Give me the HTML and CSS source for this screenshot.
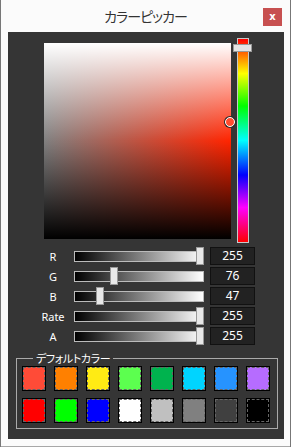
FILE: index.html
```html
<!DOCTYPE html>
<html lang="ja">
<head>
    <meta charset="UTF-8">
    <title>カラーピッカー</title>
    <link rel="stylesheet" href="styles.css">
</head>
<body>

    <div class="window">
        <div class="titlebar">
            <span></span>
            <span class="title">カラーピッカー</span>
            <button class="close">x</button>
        </div>

        <div class="panel">
            <div class="picker">
                <div class="square">
                    <span class="marker"></span>
                </div>
                <div class="hue">
                    <span class="hue-handle"></span>
                </div>
            </div>

            <div class="sliders" id="sliders">
                <!-- rows are built below -->
            </div>

            <fieldset class="defaults">
                <legend>デフォルトカラー</legend>
                <div class="swatches" id="swatches"></div>
            </fieldset>
        </div>
    </div>

    <script>
        const channels = [
            { name: 'R', value: 255 },
            { name: 'G', value: 76 },
            { name: 'B', value: 47 },
            { name: 'Rate', value: 255 },
            { name: 'A', value: 255 }
        ];

        const swatchColors = [
            '#ff4b37', '#ff8000', '#ffeb14', '#5cff4f', '#00b34e', '#00d4ff', '#2693ff', '#b66cff',
            '#ff0000', '#00ff00', '#0000ff', '#ffffff', '#c0c0c0', '#808080', '#404040', '#000000'
        ];

        const sliders = document.getElementById('sliders');
        channels.forEach(ch => {
            const row = document.createElement('div');
            row.className = 'slider-row';
            const left = Math.round(ch.value / 255 * 122);
            row.innerHTML = `
                <span class="label">${ch.name}</span>
                <div class="track"><span class="thumb" style="left:${left}px"></span></div>
                <span class="value">${ch.value}</span>
            `;
            sliders.appendChild(row);
        });

        const swatches = document.getElementById('swatches');
        swatchColors.forEach(c => {
            const sw = document.createElement('div');
            sw.className = 'swatch';
            sw.innerHTML = `<span style="background:${c}"></span>`;
            swatches.appendChild(sw);
        });
    </script>

</body>
</html>
```

FILE: styles.css
```css
body {
    margin: 0;
    background: #777;
    font-family: "Noto Sans", "Noto Sans CJK JP", sans-serif;
}

.window {
    width: 289px;
    height: 446px;
    margin-left: 1px;
    background: #fbfbfb;
    border-bottom: 1px solid #a8a8a8;
    position: relative;
}

.titlebar {
    height: 32px;
    display: grid;
    grid-template-columns: 1fr auto 1fr;
    align-items: center;
}

.title {
    font-family: "Noto Sans CJK JP", sans-serif;
    font-feature-settings: "palt";
    font-size: 14px;
    letter-spacing: -1px;
    color: #333;
    margin-top: -1px;
}

.close {
    justify-self: end;
    margin-right: 8px;
    margin-top: 1px;
    width: 19px;
    height: 18px;
    padding: 0;
    border: none;
    background: #c75050;
    color: #fff;
    font-family: "DejaVu Sans", sans-serif;
    font-weight: bold;
    font-size: 10px;
    line-height: 16px;
}

.panel {
    margin: 0 6px 0 7px;
    height: 407px;
    background: #353535;
    padding-top: 6px;
    box-sizing: border-box;
}

.picker {
    display: flex;
    align-items: flex-start;
    margin-left: 36px;
}

.square {
    position: relative;
    width: 187px;
    height: 196px;
    margin-top: 5px;
    background:
        linear-gradient(to bottom, #fff 0%, rgba(255,255,255,0) 50%, rgba(0,0,0,0) 50%, #000 100%),
        linear-gradient(to right, #808080, #ff2400);
}

.marker {
    position: absolute;
    left: 181px;
    top: 74px;
    width: 8px;
    height: 8px;
    border-radius: 50%;
    background: rgb(255, 76, 47);
    border: 1.5px solid #fff;
    box-shadow: 0 0 0 1px #2a2a2a;
}

.hue {
    position: relative;
    margin-left: 6px;
    width: 10px;
    height: 203px;
    border: 1px solid #c8c8c8;
    background: linear-gradient(to bottom, #f00 0%, #ff0 17%, #0f0 33%, #0ff 50%, #00f 67%, #f0f 83%, #f00 100%);
}

.hue-handle {
    position: absolute;
    left: -5px;
    top: 5px;
    width: 17px;
    height: 6px;
    background: #e4e4e4;
    border: 1px solid #999;
}

.sliders {
    margin-top: 3px;
}

.slider-row {
    height: 20px;
    display: flex;
    align-items: center;
    padding-left: 32px;
}

.label {
    width: 26px;
    text-align: center;
    color: #fff;
    font-size: 11px;
}

.track {
    position: relative;
    margin-left: 8px;
    width: 128px;
    height: 9px;
    border: 1px solid #bbb;
    background: linear-gradient(to right, #000, #fff);
}

.thumb {
    position: absolute;
    top: -5px;
    width: 6px;
    height: 16px;
    background: #e8e8e8;
    border: 1px solid #999;
    margin-left: -1px;
}

.value {
    margin-left: 6px;
    width: 43px;
    height: 16px;
    border: 1px solid #111;
    background: #222;
    color: #fff;
    font-size: 12px;
    line-height: 16px;
    text-align: center;
}

.defaults {
    margin: 5px 6px 0 8px;
    padding: 1px 5px 5px 5px;
    border: 1px solid #aaa;
}

.defaults legend {
    margin-left: 11px;
    padding: 0 3px;
    color: #fff;
    font-family: "Noto Sans CJK JP", sans-serif;
    font-feature-settings: "palt";
    font-size: 11px;
    letter-spacing: -0.4px;
    line-height: 14px;
}

.swatches {
    display: grid;
    grid-template-columns: repeat(8, 24px);
    grid-auto-rows: 25px;
    column-gap: 8px;
    row-gap: 7px;
}

.swatch {
    border: 1px solid #000;
    display: flex;
}

.swatch span {
    flex: 1;
    border: 1px dashed #666;
}
```
